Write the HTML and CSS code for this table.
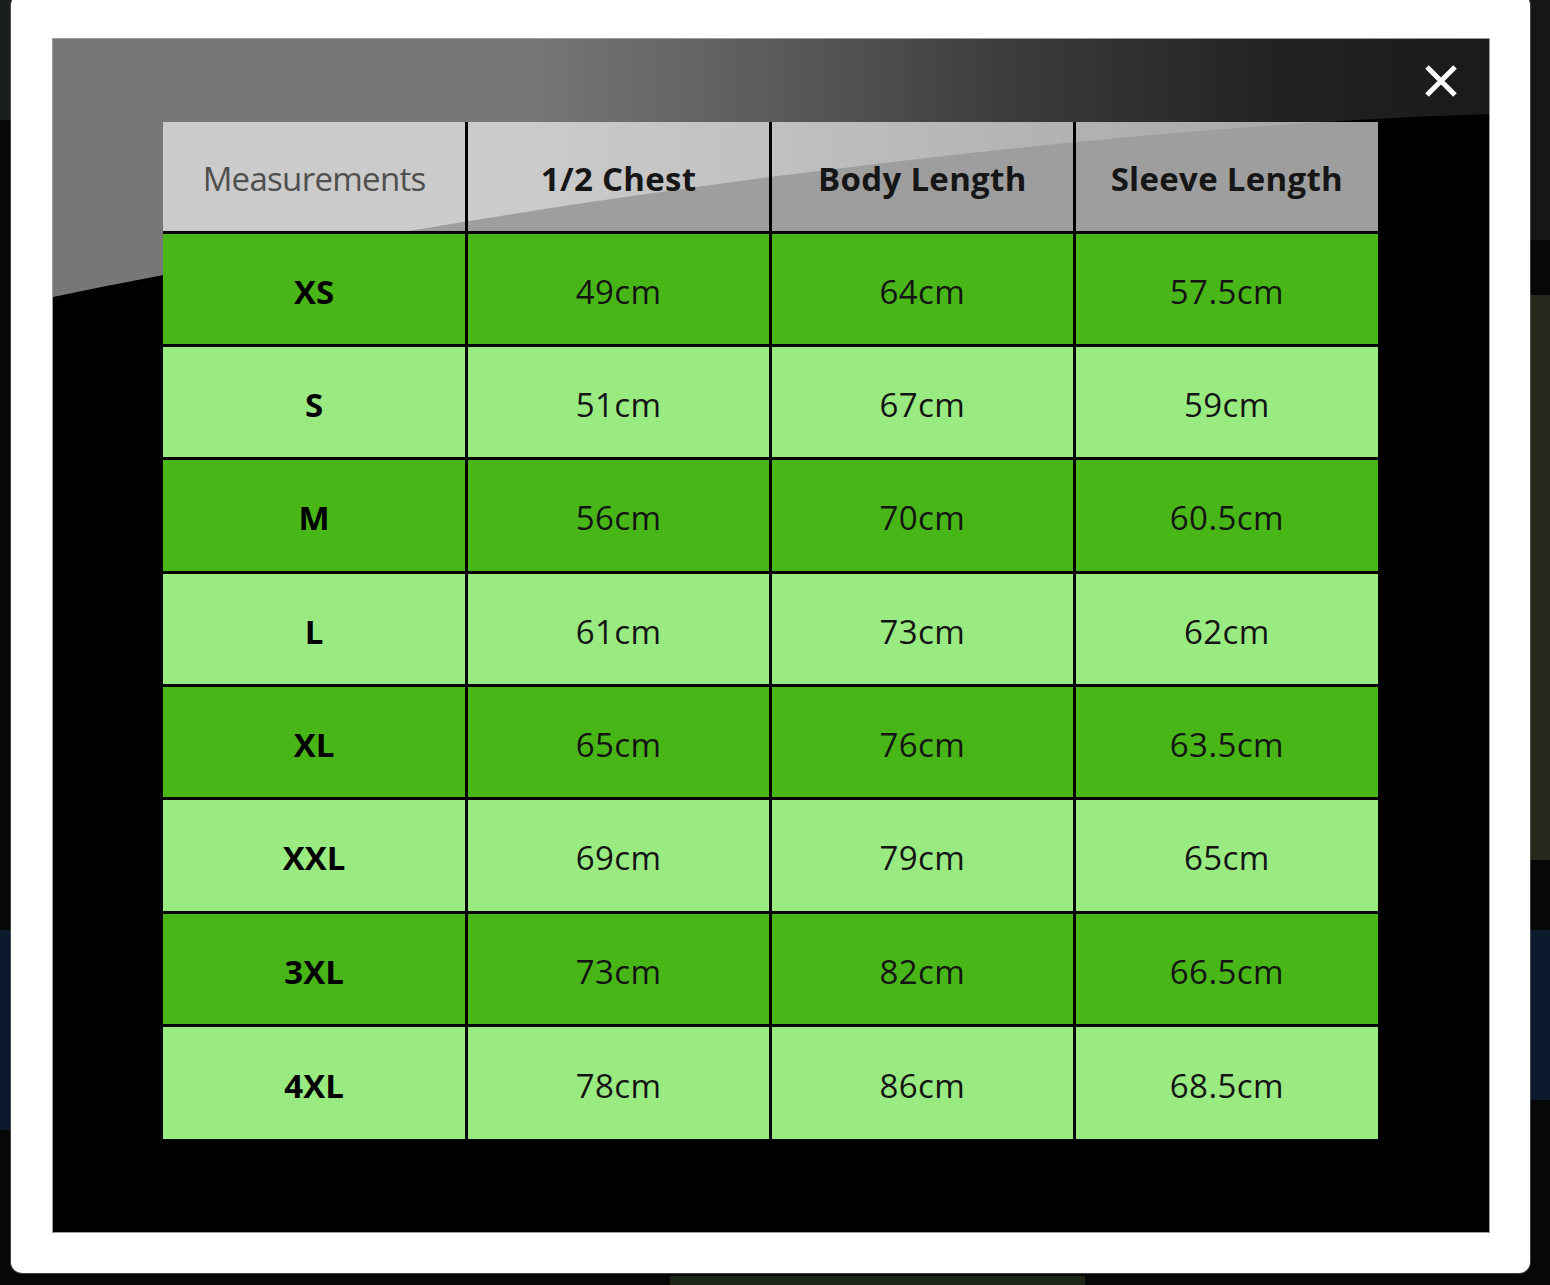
FILE: index.html
```html
<!DOCTYPE html>
<html lang="en">
<head>
<meta charset="utf-8">
<title>Size Chart</title>
<link rel="stylesheet" href="styles.css">
</head>
<body>
<div class="modal">
  <div class="chart">
    <svg class="chart-art" width="1436" height="1193" viewBox="0 0 1436 1193" aria-hidden="true">
      <defs>
        <linearGradient id="gloss" x1="0" y1="0" x2="1" y2="0">
          <stop offset="0" stop-color="#777777"/>
          <stop offset="0.33" stop-color="#777777"/>
          <stop offset="0.5" stop-color="#5b5b5b"/>
          <stop offset="0.67" stop-color="#3b3b3b"/>
          <stop offset="0.85" stop-color="#222222"/>
          <stop offset="1" stop-color="#1a1a1a"/>
        </linearGradient>
      </defs>
      <path d="M0 0 H1436 V75 C1000 90 450 165 0 258 Z" fill="url(#gloss)"/>
    </svg>
    <button class="close" type="button" aria-label="Close">
      <svg width="36" height="34" viewBox="0 0 36 34">
        <path d="M4 3 L32 31 M32 3 L4 31" stroke="#ffffff" stroke-width="5" stroke-linecap="butt"/>
      </svg>
    </button>
    <table class="sizes">
      <thead>
        <tr>
          <th class="muted">Measurements</th>
          <th>1/2 Chest</th>
          <th>Body Length</th>
          <th>Sleeve Length</th>
        </tr>
      </thead>
      <tbody>
        <tr class="dark"><td class="size">XS</td><td>49cm</td><td>64cm</td><td>57.5cm</td></tr>
        <tr class="light"><td class="size">S</td><td>51cm</td><td>67cm</td><td>59cm</td></tr>
        <tr class="dark"><td class="size">M</td><td>56cm</td><td>70cm</td><td>60.5cm</td></tr>
        <tr class="light"><td class="size">L</td><td>61cm</td><td>73cm</td><td>62cm</td></tr>
        <tr class="dark"><td class="size">XL</td><td>65cm</td><td>76cm</td><td>63.5cm</td></tr>
        <tr class="light"><td class="size">XXL</td><td>69cm</td><td>79cm</td><td>65cm</td></tr>
        <tr class="dark"><td class="size">3XL</td><td>73cm</td><td>82cm</td><td>66.5cm</td></tr>
        <tr class="light"><td class="size">4XL</td><td>78cm</td><td>86cm</td><td>68.5cm</td></tr>
      </tbody>
    </table>
  </div>
</div>
</body>
</html>
```

FILE: styles.css
```css
html, body {
  margin: 0;
  padding: 0;
}

body {
  width: 1550px;
  height: 1285px;
  overflow: hidden;
  background-color: #070707;
  background-image:
    linear-gradient(#1b1f1b, #1b1f1b),
    linear-gradient(#161616, #161616),
    linear-gradient(#252a1d, #252a1d),
    linear-gradient(#0b1a2d, #0b1a2d),
    linear-gradient(#0b1a2d, #0b1a2d),
    linear-gradient(#1c2416, #1c2416);
  background-repeat: no-repeat;
  background-position:
    0 0,
    1530px 0,
    1530px 295px,
    0 930px,
    1530px 930px,
    670px 1276px;
  background-size:
    11px 120px,
    20px 240px,
    20px 565px,
    11px 200px,
    20px 170px,
    415px 9px;
  font-family: "Open Sans", "Noto Sans", "DejaVu Sans", sans-serif;
}

.modal {
  box-sizing: border-box;
  width: 1519px;
  height: 1279px;
  margin: -6px 0 0 11px;
  padding: 45px 41px 41px 42px;
  background: #ffffff;
  border-radius: 11px;
  box-shadow: 0 0 0 1px rgba(120, 120, 120, 0.5);
}

.chart {
  position: relative;
  box-sizing: border-box;
  width: 1436px;
  height: 1193px;
  padding: 83px 0 0 110px;
  background: #000000;
  box-shadow: 0 0 0 1px rgba(90, 90, 90, 0.6);
}

.chart-art {
  position: absolute;
  left: 0;
  top: 0;
  display: block;
}

.close {
  position: absolute;
  top: 25px;
  right: 30px;
  width: 36px;
  height: 34px;
  padding: 0;
  border: 0;
  background: transparent;
  cursor: pointer;
}

.close svg {
  display: block;
}

.sizes {
  position: relative;
  width: 1215px;
  table-layout: fixed;
  border-collapse: collapse;
  border-style: hidden;
  font-size: 33px;
}

.sizes th,
.sizes td {
  border: 3px solid #000000;
  padding: 0;
  text-align: center;
  vertical-align: middle;
}

.sizes th {
  box-sizing: border-box;
  height: 110px;
  padding-top: 4px;
  background: rgba(255, 255, 255, 0.62);
  color: #161616;
  font-weight: 700;
  letter-spacing: 0.3px;
}

.sizes th.muted {
  color: #4f4f4f;
  font-weight: 400;
  letter-spacing: -0.7px;
}

.sizes td {
  box-sizing: border-box;
  height: 113.35px;
  padding-top: 5px;
  color: #141414;
  font-weight: 500;
  letter-spacing: 0.4px;
}

.sizes td.size {
  color: #000000;
  font-weight: 700;
  letter-spacing: 0;
}

.sizes tr.dark td {
  background: #49b618;
}

.sizes tr.light td {
  background: #99eb81;
}
```
